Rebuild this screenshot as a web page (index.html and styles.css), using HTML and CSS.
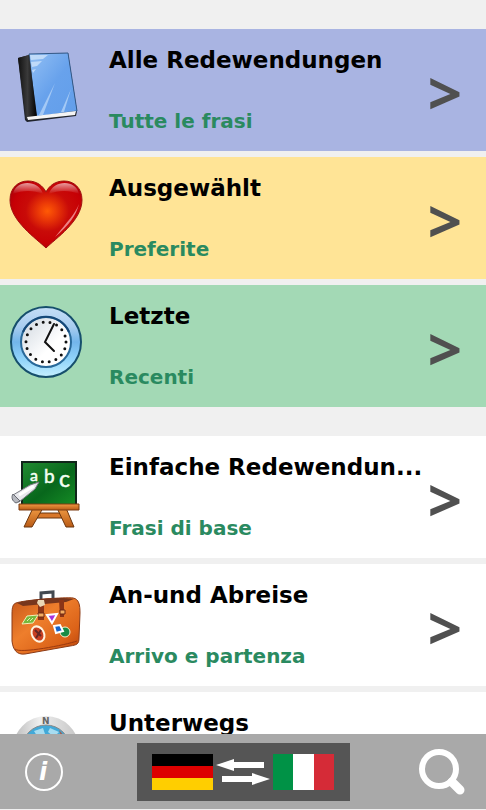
FILE: index.html
```html
<!DOCTYPE html>
<html lang="de">
<head>
<meta charset="utf-8">
<meta name="viewport" content="width=device-width, initial-scale=1">
<title>Redewendungen</title>
<link rel="stylesheet" href="styles.css">
</head>
<body>
<div class="app">
<main class="list">
  <nav class="group">
    <a class="row row-all" href="#all">
      <svg class="icon" viewBox="0 0 74 74" aria-hidden="true">
        <defs>
          <linearGradient id="cover" x1="0" y1="0" x2="1" y2="1"><stop offset="0" stop-color="#93c0f4"/><stop offset=".5" stop-color="#68a2ec"/><stop offset="1" stop-color="#629eea"/></linearGradient>
          <linearGradient id="spine"><stop offset="0" stop-color="#111"/><stop offset=".5" stop-color="#3a3a3a"/><stop offset="1" stop-color="#000"/></linearGradient>
        </defs>
        <path d="M9 8 20 5 59 3 68 61 67 66 18 72 16 70Z" fill="#20242c"/>
        <path d="M20 4 59 3 68 61 27 67Z" fill="url(#cover)" stroke="#345987" stroke-width="1"/>
        <path d="M9 8 20 5 28 66 17 69Z" fill="url(#spine)"/>
        <path d="M18 67 67 61 66 65 19 70Z" fill="#f4f4f4"/>
        <path d="M21 5 39 5 34 9 22 10ZM22 12 33 11 28 16 23 17ZM23 20 27 19 24 23Z" fill="#d2e5fb" opacity=".75"/>
        <path d="M30 65 46 33 34 65ZM52 62 62 39 55 62Z" fill="#b4d3f8" opacity=".8"/>
      </svg>
      <span class="text"><span class="title">Alle Redewendungen</span><span class="subtitle">Tutte le frasi</span></span>
      <span class="chevron" aria-hidden="true">&gt;</span>
    </a>
    <a class="row row-favorites" href="#favorites">
      <svg class="icon" viewBox="0 0 74 74" aria-hidden="true">
        <defs>
          <radialGradient id="heart" cx=".52" cy=".45" r=".6"><stop offset="0" stop-color="#ff5a05"/><stop offset=".2" stop-color="#ec3b07"/><stop offset=".5" stop-color="#c90b08"/><stop offset=".8" stop-color="#c60005"/><stop offset="1" stop-color="#a90008"/></radialGradient>
          <linearGradient id="gloss" x1="0" y1="0" x2="0" y2="1"><stop offset="0" stop-color="#fff" stop-opacity=".6"/><stop offset="1" stop-color="#fff" stop-opacity="0"/></linearGradient>
        </defs>
        <path d="M37 70C28 61 1 43 1 22 1 10 9 3 19 3 28 3 34 8 37 14 40 8 46 3 55 3 65 3 73 10 73 22 73 43 46 61 37 70Z" fill="url(#heart)" stroke="#9f1111" stroke-width="1"/>
        <path d="M4 16C7 1 30 2 34 16 25 12 13 12 4 16ZM40 16C44 2 67 1 70 16 61 12 49 12 40 16Z" fill="url(#gloss)"/>
        <path d="M46 59C60 47 67 38 70 26 66 36 58 44 46 59Z" fill="#f6a0a5" opacity=".8"/>
      </svg>
      <span class="text"><span class="title">Ausgewählt</span><span class="subtitle">Preferite</span></span>
      <span class="chevron" aria-hidden="true">&gt;</span>
    </a>
    <a class="row row-recent" href="#recent">
      <svg class="icon" viewBox="0 0 74 74" aria-hidden="true">
        <defs>
          <linearGradient id="rim" x1="0" y1="0" x2="0" y2="1"><stop offset="0" stop-color="#c5def7"/><stop offset=".28" stop-color="#a9cdef"/><stop offset=".5" stop-color="#72b5eb"/><stop offset=".75" stop-color="#91d4fa"/><stop offset="1" stop-color="#c5f0ff"/></linearGradient>
          <linearGradient id="face" x1="0" y1="0" x2="1" y2="1"><stop offset="0" stop-color="#ced6df"/><stop offset=".6" stop-color="#fff"/></linearGradient>
        </defs>
        <circle cx="37" cy="36" r="35" fill="url(#rim)" stroke="#164f6c" stroke-width="2"/>
        <circle cx="37" cy="36" r="25" fill="url(#face)" stroke="#28699a" stroke-width="2"/>
        <path d="M14 26A25 25 0 0 1 60 26" fill="none" stroke="#164878" stroke-width="2"/>
        <circle cx="37" cy="36" r="20" fill="none" stroke="#111" stroke-width="3" stroke-linecap="round" stroke-dasharray="0 6.98"/>
        <path d="M45 18 36 36 45 45" fill="none" stroke="#111" stroke-width="2" stroke-linecap="round"/>
      </svg>
      <span class="text"><span class="title">Letzte</span><span class="subtitle">Recenti</span></span>
      <span class="chevron" aria-hidden="true">&gt;</span>
    </a>
  </nav>
  <nav class="group">
    <a class="row" href="#basics">
      <svg class="icon" viewBox="0 0 74 74" aria-hidden="true">
        <defs>
          <linearGradient id="board" x1="0" y1="0" x2="1" y2="1"><stop offset="0" stop-color="#218c32"/><stop offset=".55" stop-color="#08671c"/><stop offset="1" stop-color="#168d26"/></linearGradient>
          <linearGradient id="wood" x1="0" y1="0" x2="0" y2="1"><stop offset="0" stop-color="#f09a43"/><stop offset="1" stop-color="#b95b16"/></linearGradient>
        </defs>
        <path d="M27 56h30v5H27Z" fill="#d8772a" stroke="#6b360f" stroke-width="1"/>
        <path d="M24 51h10L23 70h-8ZM48 51h9l8 19h-8Z" fill="url(#wood)" stroke="#6b360f" stroke-width="1"/>
        <path d="M13 5h54v43H13Z" fill="url(#board)" stroke="#10251a" stroke-width="2"/>
        <path d="M10 47h60v6H10Z" fill="url(#wood)" stroke="#7b3b10" stroke-width="1"/>
        <g fill="#f4fff4" stroke="#f4fff4" stroke-width=".5" font-family="Lato, sans-serif" font-weight="400"><text x="21" y="24" font-size="16">a</text><text x="35" y="26" font-size="19">b</text><text x="50" y="30" font-size="23">c</text></g>
        <path d="M4 38 21 28 30 25 26 32 10 45 6 44Z" fill="#e8e8ec" stroke="#797b82" stroke-width="1"/>
        <path d="M4 37 11 44 7 46C3 44 2 40 4 37Z" fill="#b6b8bf" stroke="#666971" stroke-width="1"/>
        <path d="M10 38 25 29" stroke="#fff" stroke-width="3"/>
      </svg>
      <span class="text"><span class="title">Einfache Redewendun...</span><span class="subtitle">Frasi di base</span></span>
      <span class="chevron" aria-hidden="true">&gt;</span>
    </a>
    <a class="row" href="#arrival">
      <svg class="icon" viewBox="0 0 74 74" aria-hidden="true">
        <defs><linearGradient id="case" x1="0" y1="0" x2="1" y2="1"><stop offset="0" stop-color="#c65719"/><stop offset=".4" stop-color="#ee7e2c"/><stop offset=".75" stop-color="#db6218"/><stop offset="1" stop-color="#b54109"/></linearGradient></defs>
        <g transform="translate(0 3)">
        <path d="M32 12V5l12-1v8" fill="none" stroke="#424950" stroke-width="3"/>
        <path d="M7 15C15 12 57 9 64 10 70 11 71 17 71 25L70 50C70 56 68 57 61 58L16 66C8 67 4 62 3 53L3 26C3 19 4 16 7 15Z" fill="url(#case)" stroke="#8c3b17" stroke-width="1"/>
        <path d="M8 15C25 10 54 9 65 11L57 14 14 18Z" fill="#77361d"/>
        <path d="M6 61C10 66 57 57 68 53" fill="none" stroke="#9a390f" stroke-width="1"/>
        <path d="M29 14h6v18h-6ZM50 12h5v17h-4Z" fill="#8c3517"/>
        <path d="M29 25h6v4h-6ZM51 22h5v4h-5Z" fill="#f4ad62" stroke="#6f2815" stroke-width="1"/>
        <path d="M29 12h6l1 5-5 2-3-4Z" fill="#ead8b5"/>
        <path d="M18 28 29 27 24 35 13 36Z" fill="#75b93c" stroke="#f1efb7" stroke-width="1"/>
        <path d="M18 33 21 30M21 33 24 30" stroke="#e1edb5" stroke-width="1"/>
        <path d="M38 27 48 26 43 35Z" fill="#a832dc" stroke="#fff" stroke-width="2"/>
        <ellipse cx="29" cy="46" rx="6" ry="8" fill="#c84022" stroke="#fff3df" stroke-width="2" transform="rotate(-28 29 46)"/>
        <path d="M26 42 32 48M32 42 27 50" stroke="#632825" stroke-width="2"/>
        <circle cx="56" cy="44" r="5" fill="#188b45" stroke="#f2f2cf" stroke-width="1"/>
        <path d="M45 38 51 37 54 43 47 45Z" fill="#1764cc" stroke="#fff" stroke-width="2"/>
        </g>
      </svg>
      <span class="text"><span class="title">An-und Abreise</span><span class="subtitle">Arrivo e partenza</span></span>
      <span class="chevron" aria-hidden="true">&gt;</span>
    </a>
    <a class="row" href="#travel">
      <svg class="icon" viewBox="0 0 74 74" aria-hidden="true">
        <defs><linearGradient id="ring"><stop offset="0" stop-color="#bbb"/><stop offset=".4" stop-color="#eee"/><stop offset="1" stop-color="#c5c5c5"/></linearGradient></defs>
        <circle cx="37" cy="36" r="33" fill="url(#ring)"/>
        <circle cx="37" cy="36" r="24" fill="#42a9d8" stroke="#888" stroke-width="1"/>
        <path d="M25 18 34 15 36 21 28 23ZM41 15 50 19 45 24 39 19Z" fill="#a7dcf0"/>
        <path d="M50 17 57 25 52 23Z" fill="#a65b4c"/>
        <text x="33" y="11" font-size="9" font-weight="700" font-family="DejaVu Sans, sans-serif" fill="#666">N</text>
      </svg>
      <span class="text"><span class="title">Unterwegs</span><span class="subtitle">In viaggio</span></span>
      <span class="chevron" aria-hidden="true">&gt;</span>
    </a>
  </nav>
</main>
<footer class="bar">
  <button class="tool info" type="button" aria-label="Info">
    <svg width="48" height="48" viewBox="0 0 48 48" aria-hidden="true"><circle cx="24" cy="24" r="18" fill="none" stroke="#fff" stroke-width="2"/><text x="23" y="32" text-anchor="middle" font-family="DejaVu Sans, sans-serif" font-size="24" font-weight="700" font-style="italic" fill="#fff">i</text></svg>
  </button>
  <button class="languages" type="button" aria-label="Deutsch – Italiano">
    <svg class="flag" viewBox="0 0 61 36" aria-hidden="true"><path d="M0 0h61v12H0Z" fill="#000"/><path d="M0 12h61v12H0Z" fill="#d00"/><path d="M0 24h61v12H0Z" fill="#ffce00"/></svg>
    <svg class="arrows" viewBox="0 0 54 30" aria-hidden="true"><path d="M0 8 18 2V5H48V11H18V14ZM54 22 36 16V19H6V25H36V28Z" fill="#fff"/></svg>
    <svg class="flag" viewBox="0 0 61 36" aria-hidden="true"><path d="M0 0h21v36H0Z" fill="#009246"/><path d="M20 0h21v36H20Z" fill="#fff"/><path d="M41 0h20v36H41Z" fill="#d52b37"/></svg>
  </button>
  <button class="tool search" type="button" aria-label="Suche">
    <svg width="48" height="48" viewBox="0 0 48 48" aria-hidden="true"><circle cx="21" cy="21" r="17" fill="none" stroke="#fff" stroke-width="6"/><path d="m34 34 8 8" stroke="#fff" stroke-width="9" stroke-linecap="round"/></svg>
  </button>
</footer>
</div>
</body>
</html>
```
FILE: styles.css
```css
* {
  box-sizing: border-box;
}

body {
  margin: 0;
  background: #f0f0f0;
  font-family: Verdana, "DejaVu Sans", sans-serif;
}

.app {
  display: flex;
  flex-direction: column;
  height: 100vh;
  padding-bottom: 1px;
}

.list {
  display: flex;
  flex: 1;
  flex-direction: column;
  gap: 29px;
  min-height: 0;
  overflow: hidden;
  padding-top: 29px;
}

.group {
  display: flex;
  flex-direction: column;
  gap: 6px;
}

.row {
  display: flex;
  flex-shrink: 0;
  align-items: flex-start;
  min-height: 122px;
  padding: 15px 24px 12px 9px;
  background: #fff;
  color: #000;
  font-weight: 700;
  text-decoration: none;
}

.row-all {
  background: #a9b4e2;
}

.row-favorites {
  background: #ffe496;
}

.row-recent {
  background: #a3d9b5;
}

.icon {
  flex: none;
  width: 74px;
  height: 74px;
  margin-top: 6px;
}

.text {
  display: flex;
  flex: 1;
  flex-direction: column;
  gap: 31px;
  min-width: 0;
  margin-left: 26px;
  white-space: nowrap;
}

.title {
  font-size: 23px;
  line-height: 32px;
}

.subtitle {
  color: #2a8a60;
  font-size: 20px;
  line-height: 28px;
}

.chevron {
  align-self: center;
  color: #505050;
  font-family: "Noto Sans", sans-serif;
  font-size: 60px;
  line-height: 60px;
}

.bar {
  display: flex;
  flex: none;
  align-items: center;
  justify-content: space-between;
  height: 75px;
  padding: 0 20px;
  background: #a9a9a9;
}

.bar button {
  padding: 0;
  border: 0;
  background: none;
}

.tool svg {
  display: block;
}

.bar .languages {
  display: flex;
  align-items: center;
  justify-content: center;
  gap: 3px;
  width: 213px;
  height: 58px;
  background: #555;
}

.flag {
  width: 61px;
  height: 36px;
}

.arrows {
  width: 54px;
  height: 30px;
}
```
